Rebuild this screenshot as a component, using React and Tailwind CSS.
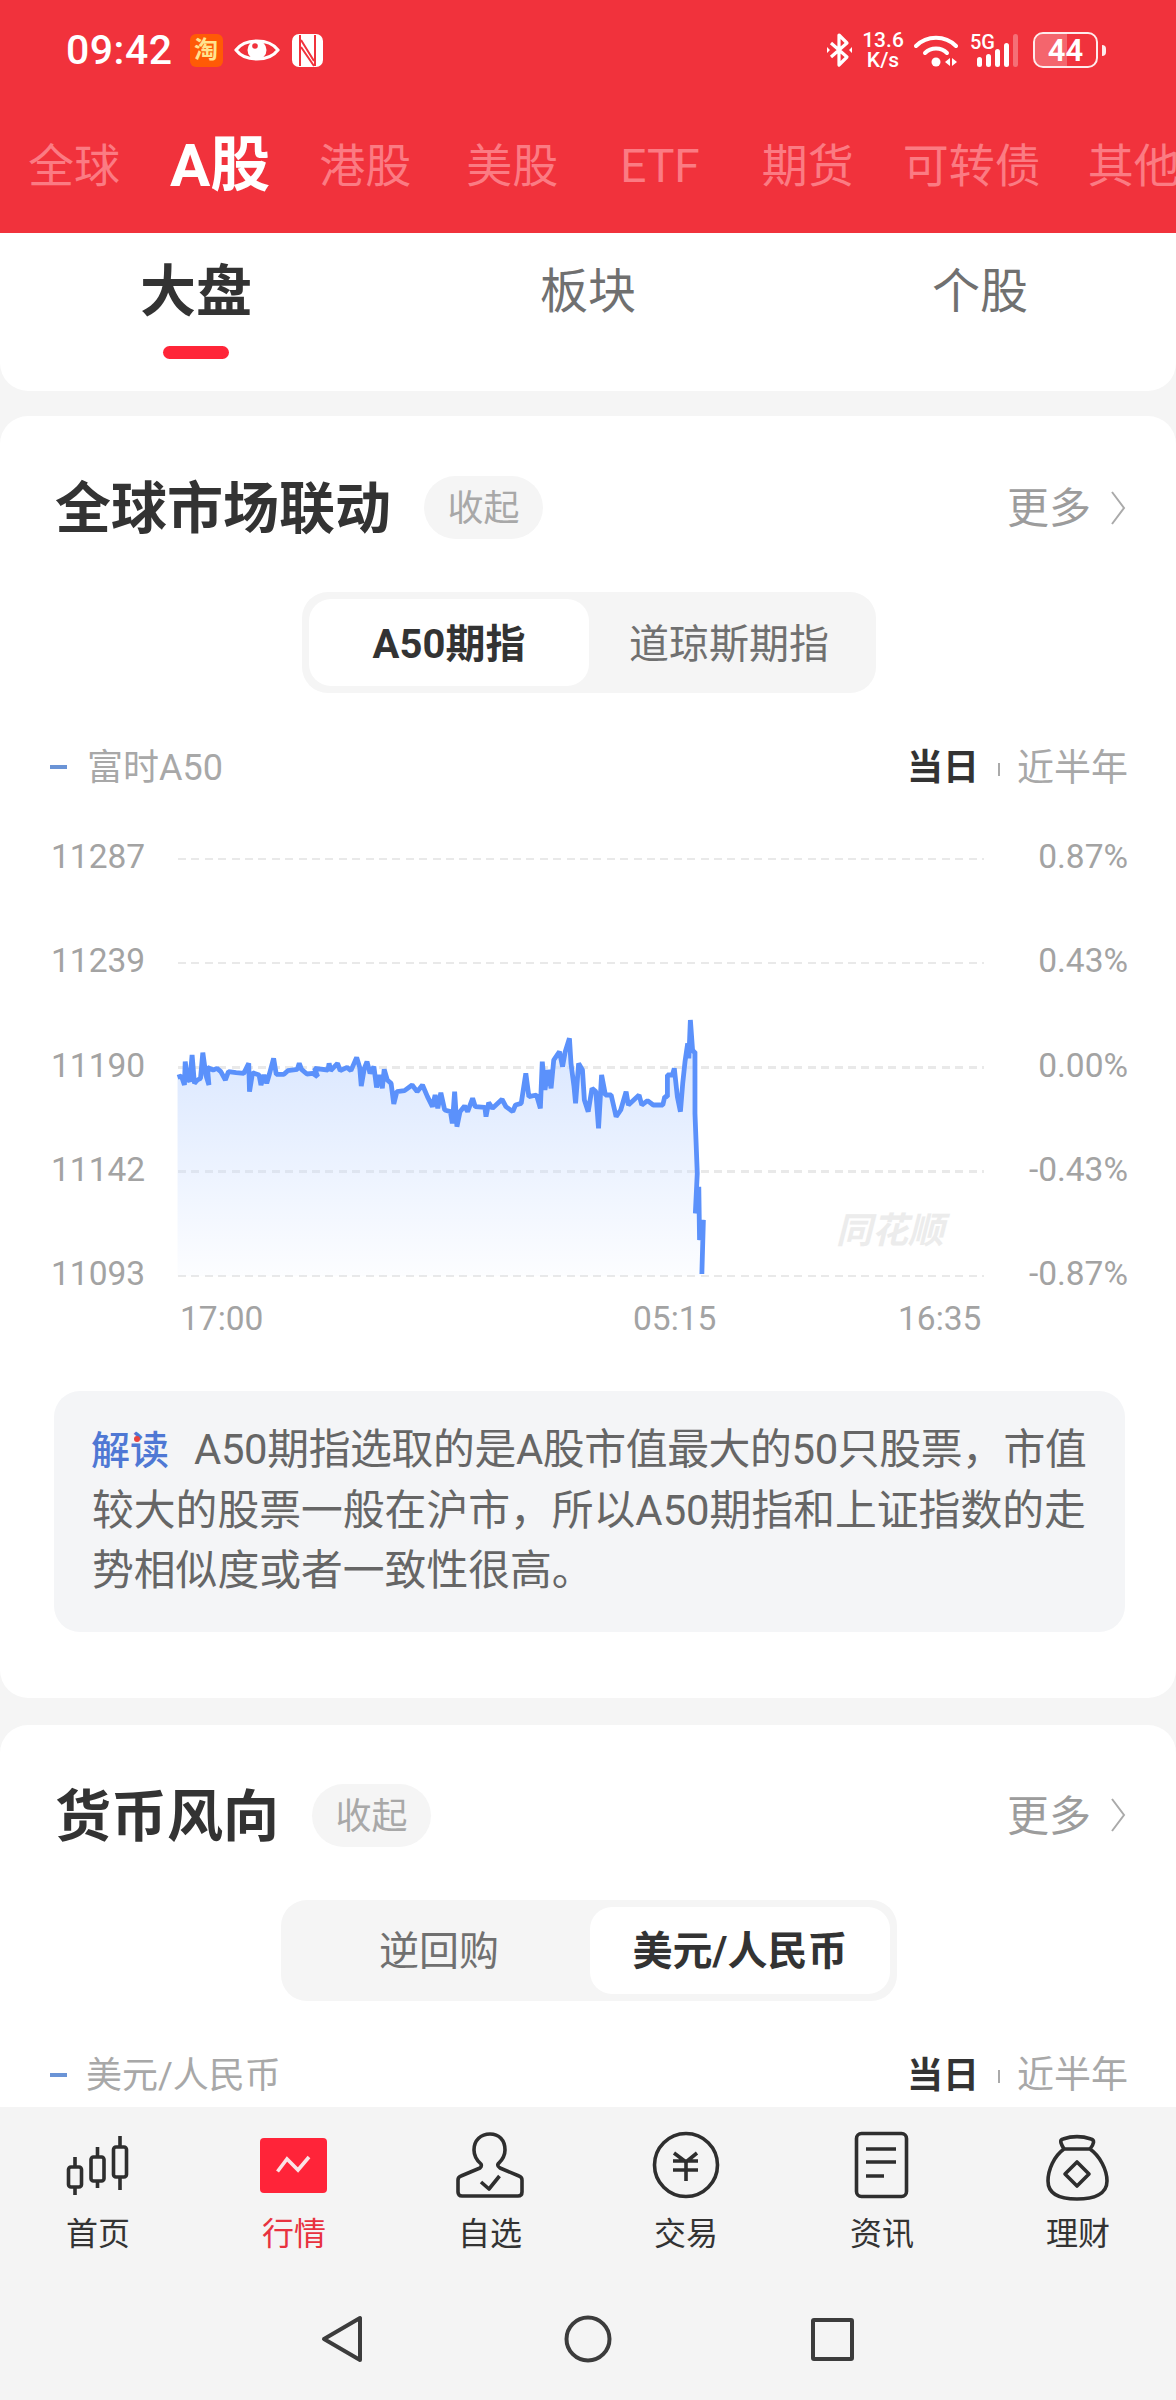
import React from 'react';

const rawLine = [
  [72,292],[82,288],[90,315],[92,245],[98,295],[104,305],[110,225],[116,310],[124,300],[132,295],[138,218],[146,285],[154,315],[150,262],[165,270],[175,265],[185,275],[197,300],[205,275],[225,278],[245,280],[258,250],[260,335],[268,278],[285,285],[290,315],[298,285],[305,310],[312,282],[323,235],[330,283],[350,283],[360,272],[385,268],[390,250],[396,268],[410,282],[425,280],[438,290],[430,265],[465,270],[468,250],[472,272],[490,250],[497,272],[515,262],[525,272],[540,232],[548,262],[552,318],[560,265],[567,245],[575,280],[585,260],[592,322],[600,285],[607,325],[612,268],[620,300],[630,310],[637,372],[645,335],[665,332],[685,315],[698,335],[712,315],[725,350],[738,380],[745,345],[752,385],[760,338],[770,390],[785,395],[790,430],[796,335],[802,440],[810,395],[822,378],[830,395],[843,355],[850,380],[875,382],[878,410],[885,368],[895,385],[920,358],[930,380],[948,395],[955,375],[970,370],[982,280],[990,350],[1010,345],[1020,385],[1025,245],[1032,330],[1040,270],[1048,325],[1055,240],[1070,215],[1078,260],[1085,215],[1096,175],[1100,250],[1108,320],[1112,370],[1120,250],[1130,270],[1135,360],[1145,395],[1155,325],[1165,335],[1172,445],[1180,285],[1190,345],[1205,345],[1218,410],[1230,390],[1244,335],[1250,375],[1278,345],[1285,375],[1300,362],[1315,375],[1340,375],[1345,350],[1352,350],[1352,285],[1365,285],[1370,265],[1378,350],[1386,395],[1392,310],[1398,245],[1405,190],[1408,235],[1412,120],[1418,215],[1424,215],[1424,400],[1430,580],[1425,700],[1434,620],[1436,780],[1446,720],[1442,882],
];

// traced from the picture, moved into chart coordinates
const linePts = rawLine.map(([x, y]) => [150 + x / 2.613, 143 + y / 3]);
const lineStr = linePts.map(p => p.join(',')).join(' ');
const areaStr = `${lineStr} ${linePts[linePts.length - 1][0]},439 ${linePts[0][0]},439`;

const topTabs = [
  { label: '全球', cls: 'ml-[28px]' },
  { label: 'A股', cls: 'ml-[50px]', active: true },
  { label: '港股', cls: 'ml-[49px]' },
  { label: '美股', cls: 'ml-[55px]' },
  { label: 'ETF', cls: 'ml-[62px]' },
  { label: '期货', cls: 'ml-[62px]' },
  { label: '可转债', cls: 'ml-[49px]' },
  { label: '其他', cls: 'ml-[47px]' },
];

const rows = [
  ['11287', '0.87%'],
  ['11239', '0.43%'],
  ['11190', '0.00%'],
  ['11142', '-0.43%'],
  ['11093', '-0.87%'],
];

const StatusBar = () => (
  <div className="flex h-[40px] items-center justify-between pl-[66px] pr-[70px] text-white">
    <div className="flex items-center">
      <span className="text-[41px] font-medium leading-none tracking-[0.5px]">09:42</span>
      <span className="ml-[17px] flex h-[33px] w-[33px] items-center justify-center rounded-[6px] bg-[#ff5a06] text-[24px] font-bold leading-none text-[#ffe38f]">淘</span>
      <svg width="46" height="30" viewBox="0 0 46 30" className="ml-[11px]">
        <path d="M2 15C11 3 35 3 44 15C35 27 11 27 2 15Z" fill="none" stroke="#fff" strokeWidth="3" />
        <circle cx="23" cy="15" r="9.5" fill="#fff" />
        <circle cx="21" cy="11" r="2.8" fill="#f1323c" />
      </svg>
      <svg width="31" height="33" viewBox="0 0 31 33" className="ml-[12px]">
        <rect width="31" height="33" rx="7" fill="#fff" />
        <path d="M8 1V32M23 1V32M9 6L22 27M9 13L22 32" fill="none" stroke="#f1323c" strokeWidth="2" />
      </svg>
    </div>
    <div className="flex items-center">
      <svg width="25" height="36" viewBox="0 0 25 36">
        <path d="M4 11L20 25L12 33V3L20 11L4 25" fill="none" stroke="#fff" strokeWidth="3.2" strokeLinejoin="round" />
        <path d="M0 15L3 18L0 21ZM25 15L22 18L25 21Z" fill="#fff" />
      </svg>
      <div className="ml-[9px] flex w-[44px] flex-col items-center text-[21px] font-medium leading-[20px]">
        <span>13.6</span>
        <span>K/s</span>
      </div>
      <svg width="44" height="36" viewBox="0 0 44 36" className="ml-[9px]">
        <path d="M2 14C13 3 31 3 42 14" fill="none" stroke="#fff" strokeWidth="4" strokeLinecap="round" />
        <path d="M11 21C17 15 27 15 33 21" fill="none" stroke="#fff" strokeWidth="4" strokeLinecap="round" />
        <circle cx="22" cy="30" r="4.5" fill="#fff" />
        <path d="M36 26V34L31 30ZM38 26V34L43 30Z" fill="#fff" />
      </svg>
      <div className="relative ml-[12px] flex h-[34px] w-[50px] items-end gap-[4.5px] pl-[7px]">
        <span className="absolute left-0 top-0 text-[20px] font-medium leading-[19px]">5G</span>
        <span className="h-[10px] w-[4.5px] rounded-full bg-white" />
        <span className="h-[13px] w-[4.5px] rounded-full bg-white" />
        <span className="h-[18px] w-[4.5px] rounded-full bg-white" />
        <span className="h-[24px] w-[4.5px] rounded-full bg-white" />
        <span className="h-[33px] w-[4.5px] rounded-full bg-white/30" />
      </div>
      <div className="relative ml-[13px] h-[36px] w-[65px] overflow-hidden rounded-[10px] border-[2.5px] border-white/90">
        <span className="block h-full w-[52%] bg-white/25" />
        <span className="absolute inset-0 flex items-center justify-center text-[31px] font-semibold leading-none">44</span>
      </div>
      <span className="ml-[4px] h-[11px] w-[4px] rounded-r-full bg-white/90" />
    </div>
  </div>
);

const Header = () => (
  <div className="h-[233px] shrink-0 overflow-hidden bg-[#f1323c]">
    <div className="pt-[30px]">
      <StatusBar />
    </div>
    <div className="mt-[66px] flex h-[60px] items-center whitespace-nowrap">
      {topTabs.map(t => (
        <span
          key={t.label}
          className={`${t.cls} shrink-0 ${t.active ? 'text-[60px] font-bold text-white' : 'text-[46px] text-[#fb7b83]'} leading-none`}
        >
          {t.label}
        </span>
      ))}
    </div>
  </div>
);

const SubTabs = () => (
  <div className="rounded-b-[28px] bg-white">
    <div className="grid h-[158px] grid-cols-3">
      <div className="flex flex-col items-center pt-[29px]">
        <span className="text-[56px] font-bold leading-[60px] text-[#333]">大盘</span>
        <span className="mt-[24px] h-[13px] w-[66px] rounded-full bg-[#ff2538]" />
      </div>
      <div className="flex justify-center pt-[29px] text-[48px] leading-[60px] text-[#707070]">板块</div>
      <div className="flex justify-center pt-[29px] text-[48px] leading-[60px] text-[#707070]">个股</div>
    </div>
  </div>
);

const SectionHeader = ({ title }) => (
  <div className="flex h-[63px] items-center pl-[55px] pr-[50px]">
    <span className="pt-[3px] text-[56px] font-bold leading-none text-[#333]">{title}</span>
    <span className="ml-[33px] flex h-[63px] w-[119px] items-center justify-center rounded-full bg-[#f5f5f5] pt-[3px] text-[36px] text-[#a8a8a8]">收起</span>
    <span className="ml-auto pt-[2px] text-[42px] text-[#9c9c9c]">更多</span>
    <svg width="16" height="36" viewBox="0 0 16 36" className="ml-[19px]">
      <path d="M2 2L14 18L2 34" fill="none" stroke="#aaa" strokeWidth="2" />
    </svg>
  </div>
);

const Segment = ({ left, right, leftWidth, rightWidth, activeRight }) => (
  <div className="flex justify-center pl-[2px]">
    <div className="flex h-[101px] items-stretch rounded-[26px] bg-[#f5f5f5] p-[7px]">
      <div className={`${leftWidth} flex items-center justify-center rounded-[22px] pt-[4px] text-[40px] ${activeRight ? 'text-[#707070]' : 'bg-white font-bold text-[#333]'}`}>{left}</div>
      <div className={`${rightWidth} flex items-center justify-center rounded-[22px] pt-[4px] text-[40px] ${activeRight ? 'bg-white font-bold text-[#333]' : 'text-[#707070]'}`}>{right}</div>
    </div>
  </div>
);

const Legend = ({ label, labelCls }) => (
  <div className="flex h-[40px] items-center pl-[50px] pr-[48px]">
    <span className="h-[4px] w-[17px] bg-[#6b94d6]" />
    <span className={`${labelCls} pt-[2px] text-[36px] leading-none text-[#a8a8a8]`}>{label}</span>
    <span className="ml-auto pt-[2px] text-[36px] font-bold leading-none text-[#333]">当日</span>
    <span className="ml-[19px] mt-[4px] h-[13px] w-[2px] bg-[#aaa]" />
    <span className="ml-[17px] pt-[2px] text-[37px] leading-none text-[#a8a8a8]">近半年</span>
  </div>
);

const Chart = () => (
  <div className="relative mt-[50px]">
    <div className="flex flex-col gap-[60.2px] pl-[51px] pr-[48px]">
      {rows.map(([price, pct]) => (
        <div key={price} className="flex h-[44px] items-center text-[33.5px] leading-none text-[#a3a3a3]">
          <span className="mb-[4px] w-[127px] shrink-0">{price}</span>
          <span className="h-[2.5px] w-[806px] shrink-0 bg-[repeating-linear-gradient(90deg,#e9e9e9_0,#e9e9e9_8px,transparent_8px,transparent_13.4px)]" />
          <span className="mb-[4px] flex-1 text-right">{pct}</span>
        </div>
      ))}
    </div>
    <svg width="1176" height="460" viewBox="0 0 1176 460" className="absolute left-0 top-0">
      <defs>
        <linearGradient id="area" x1="0" y1="0" x2="0" y2="1">
          <stop offset="0" stopColor="#c9dcff" stopOpacity="0.75" />
          <stop offset="1" stopColor="#c9dcff" stopOpacity="0.05" />
        </linearGradient>
      </defs>
      <polygon points={areaStr} fill="url(#area)" />
      <polyline points={lineStr} fill="none" stroke="#5b91fb" strokeWidth="4.8" strokeLinejoin="bevel" />
    </svg>
    <span className="absolute left-[836px] top-[376px] text-[36px] font-bold italic leading-none text-[#ececec]">同花顺</span>
    <div className="flex h-[40px] items-center pl-[180px] pt-[2px] text-[33.5px] leading-none text-[#a3a3a3]">
      <span className="w-[453px]">17:00</span>
      <span className="w-[265px]">05:15</span>
      <span>16:35</span>
    </div>
  </div>
);

const Note = () => (
  <div className="ml-[54px] mr-[51px] mt-[53px] h-[241px] rounded-[26px] bg-[#f4f5f7] pl-[38px] pt-[29px] text-[41.8px] leading-[59.5px] text-[#666] whitespace-nowrap">
    <span className="relative -ml-[1px] mr-[25px] text-[39px] font-medium text-[#4f78d4]">
      解读
      <span className="absolute left-[43px] top-[8px] h-[6px] w-[6px] rounded-full bg-[#e8433f]" />
    </span>
    <span className="tracking-[-0.35px]">A50期指选取的是A股市值最大的50只股票，市值</span>
    <br />
    较大的股票一般在沪市，所以A50期指和上证指数的走
    <br />
    势相似度或者一致性很高。
  </div>
);

const NavIcon = ({ children }) => (
  <svg width="72" height="72" viewBox="0 0 72 72" fill="none" stroke="#2e2e2e" strokeWidth="3.6" strokeLinejoin="round">
    {children}
  </svg>
);

const navItems = [
  {
    label: '首页',
    icon: (
      <NavIcon>
        <path d="M13 27V37M13 57V65M35.5 17V27M35.5 51V58M58 6V17M58 47V60" />
        <rect x="6.5" y="37" width="13" height="20" rx="2.5" />
        <rect x="29" y="27" width="13" height="24" rx="2.5" />
        <rect x="51.5" y="17" width="13" height="30" rx="2.5" />
      </NavIcon>
    ),
  },
  {
    label: '行情',
    active: true,
    icon: (
      <svg width="72" height="72" viewBox="0 0 72 72">
        <rect x="2" y="8" width="67" height="55" rx="4" fill="#ff2439" />
        <path d="M19.5 41.5L29 29L40 40L51 27" fill="none" stroke="#fbe3e5" strokeWidth="3.6" />
      </svg>
    ),
  },
  {
    label: '自选',
    icon: (
      <NavIcon>
        <path d="M4 50Q4 47 7 46L26 38Q28 36 27 34Q20 28 20 20C20 10 27 4 36 4C45 4 51 10 51 20C51 28 46 32 44 34Q43 36 46 38L65 46Q68 47 68 50V62Q68 66 64 66H8Q4 66 4 62Z" />
        <path d="M27 52L35 59L45.5 46" />
      </NavIcon>
    ),
  },
  {
    label: '交易',
    icon: (
      <NavIcon>
        <circle cx="36" cy="35" r="31.5" />
        <path d="M24 23L36 32L47 23M23 31H48M23 40H48M36 32V51" />
      </NavIcon>
    ),
  },
  {
    label: '资讯',
    icon: (
      <NavIcon>
        <rect x="10.5" y="3.5" width="50" height="63" rx="5" />
        <path d="M20 19H50M20 32H50M20 46H38" />
      </NavIcon>
    ),
  },
  {
    label: '理财',
    icon: (
      <NavIcon>
        <path d="M22 19C12 26 6 40 6 51C6 64 18 69 35 69C52 69 65 64 65 51C65 40 58 26 48 19Z" />
        <path d="M22 19C19 14 17 10 21 9C30 6 40 6 49 9C53 10 52 14 48 19" />
        <path d="M35 32L47 44L35 56L23 44Z" />
      </NavIcon>
    ),
  },
];

const BottomNav = () => (
  <div className="h-[293px] shrink-0 bg-[#f4f4f4]">
    <div className="grid grid-cols-6 pt-[23px]">
      {navItems.map(item => (
        <div key={item.label} className="flex flex-col items-center">
          {item.icon}
          <span className={`mt-[12px] text-[32px] leading-[40px] ${item.active ? 'text-[#e8323f]' : 'text-[#333]'}`}>{item.label}</span>
        </div>
      ))}
    </div>
    <div className="mt-[60px] flex items-center justify-center gap-[199px] pr-[3px]">
      <svg width="46" height="50" viewBox="0 0 46 50" fill="none" stroke="#3c3c3c" strokeWidth="4" strokeLinejoin="round">
        <path d="M41 4V46L5 25Z" />
      </svg>
      <svg width="48" height="48" viewBox="0 0 48 48" fill="none" stroke="#3c3c3c" strokeWidth="4">
        <circle cx="24" cy="24" r="21.5" />
      </svg>
      <span className="h-[43px] w-[43px] rounded-[3px] border-[4px] border-[#3c3c3c]" />
    </div>
  </div>
);

export default function App() {
  return (
    <div className="flex h-[2400px] w-[1176px] flex-col overflow-hidden bg-[#f5f5f5] [font-family:Roboto,'Noto_Sans_CJK_SC',sans-serif]">
      <Header />
      <div className="min-h-0 flex-1 overflow-hidden">
        <SubTabs />
        {/* 全球市场联动 */}
        <div className="mt-[25px] rounded-[28px] bg-white pb-[66px] pt-[60px]">
          <SectionHeader title="全球市场联动" />
          <div className="mt-[53px]">
            <Segment left="A50期指" right="道琼斯期指" leftWidth="w-[280px]" rightWidth="w-[280px]" />
          </div>
          <div className="mt-[54px]">
            <Legend label="富时A50" labelCls="ml-[20px]" />
          </div>
          <Chart />
          <Note />
        </div>
        {/* 货币风向 */}
        <div className="mt-[27px] rounded-t-[28px] bg-white pb-[60px] pt-[59px]">
          <SectionHeader title="货币风向" />
          <div className="mt-[53px]">
            <Segment left="逆回购" right="美元/人民币" leftWidth="w-[302px]" rightWidth="w-[300px]" activeRight />
          </div>
          <div className="mt-[54px]">
            <Legend label="美元/人民币" labelCls="ml-[19px]" />
          </div>
        </div>
      </div>
      <BottomNav />
    </div>
  );
}
